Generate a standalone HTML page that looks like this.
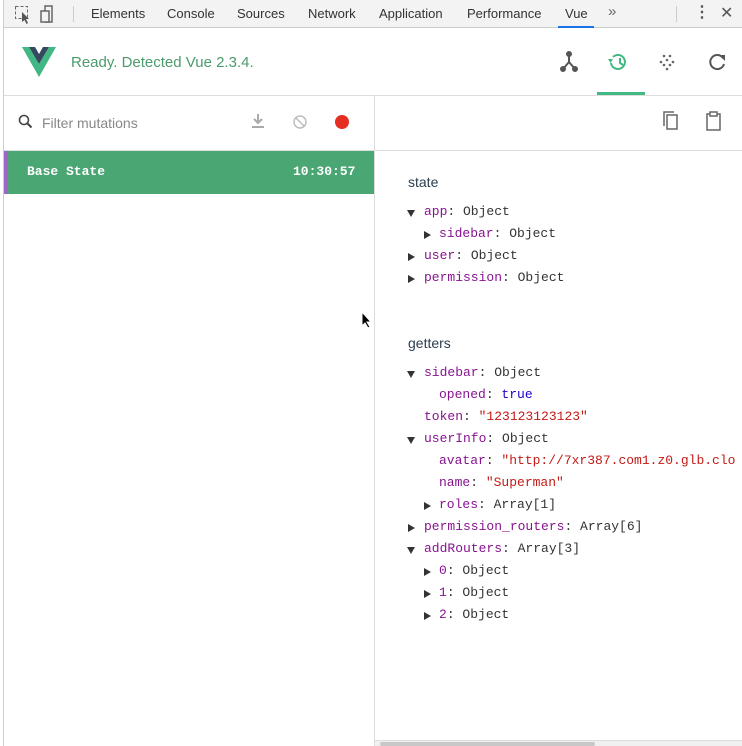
<!DOCTYPE html>
<html><head><meta charset="utf-8"><style>
*{margin:0;padding:0;box-sizing:border-box}
body{width:742px;height:746px;background:#fff;position:relative;overflow:hidden;font-family:"Liberation Sans",sans-serif}
.a{position:absolute}
.tab{position:absolute;top:6px;font-size:13px;color:#333}
.mono{font-family:"Liberation Mono",monospace;font-size:13px;color:#333;position:absolute;white-space:nowrap}
.k{color:#881391}.s{color:#c41a16}.b{color:#1c00cf}
.tri{position:absolute;width:0;height:0}
.dn{border-left:4px solid transparent;border-right:4px solid transparent;border-top:7px solid #333}
.rt{border-top:4px solid transparent;border-bottom:4px solid transparent;border-left:7px solid #333}
.h{position:absolute;font-size:14px;color:#2c3e50}
</style></head><body>
<div class="a" style="left:3px;top:0;width:1px;height:746px;background:#ccc"></div>
<div class="a" style="left:4px;top:0;width:738px;height:28px;background:#f3f3f3;border-bottom:1px solid #ccc"></div>
<svg class="a" style="left:14px;top:5px" width="50" height="20"><rect x="1.5" y="1.5" width="12" height="12" fill="none" stroke="#666" stroke-dasharray="3 2"/><path d="M8 7l7 7-3 0 2 4-1.5 1-2-4-2.5 2z" fill="#555"/><rect x="31" y="1" width="7" height="16" fill="none" stroke="#666" stroke-width="1.5"/><rect x="27" y="6" width="8" height="11" fill="#f3f3f3" stroke="#666" stroke-width="1.5"/></svg>
<div class="a" style="left:73px;top:6px;width:1px;height:16px;background:#ccc"></div>
<div class="tab" style="left:91px">Elements</div>
<div class="tab" style="left:167px">Console</div>
<div class="tab" style="left:237px">Sources</div>
<div class="tab" style="left:308px">Network</div>
<div class="tab" style="left:379px">Application</div>
<div class="tab" style="left:467px">Performance</div>
<div class="tab" style="left:565px">Vue</div>
<div class="a" style="left:558px;top:26px;width:36px;height:2px;background:#1a73e8"></div>
<div class="tab" style="left:608px;top:3px;font-size:15px;color:#666">»</div>
<div class="a" style="left:676px;top:6px;width:1px;height:16px;background:#ccc"></div>
<div class="tab" style="left:694px;top:2px;font-size:16px;color:#555;font-weight:bold">⋮</div>
<div class="tab" style="left:720px;top:3px;font-size:16px;color:#555">✕</div>
<svg class="a" style="left:22px;top:47px" width="34" height="30" viewBox="0 0 34 30"><path d="M0 0h7l10 17L27 0h7L17 30z" fill="#41b883"/><path d="M7 0h6l4 7 4-7h6L17 17z" fill="#35495e"/></svg>
<div class="a" style="left:71px;top:54px;font-size:15px;color:#4b9b6c">Ready. Detected Vue 2.3.4.</div>
<svg class="a" style="left:558px;top:51px" width="170" height="22"><g fill="#555" stroke="#555" stroke-width="2"><path d="M11 3v8M11 11l-6 7M11 11l6 7" fill="none"/><circle cx="11" cy="3" r="2"/><circle cx="5" cy="18" r="2"/><circle cx="17" cy="18" r="2"/></g>
<g stroke="#42b983" stroke-width="2" fill="none"><path d="M55 6a7 7 0 1 1-2 6"/><path d="M62 7v5l3 2"/></g><path d="M50 8l5 0-2.5 4z" fill="#42b983"/>
<g fill="#666"><circle cx="106" cy="5" r="1.3"/><circle cx="112" cy="5" r="1.3"/><circle cx="109" cy="9" r="1.3"/><circle cx="103" cy="11" r="1.3"/><circle cx="115" cy="11" r="1.3"/><circle cx="106" cy="14" r="1.3"/><circle cx="112" cy="14" r="1.3"/><circle cx="109" cy="18" r="1.3"/></g>
<path d="M165 7a7 7 0 1 0 1 6" stroke="#555" stroke-width="2" fill="none"/><path d="M161 4h6v6z" fill="#555"/></svg>
<div class="a" style="left:597px;top:92px;width:48px;height:3px;background:#42b983"></div>
<div class="a" style="left:4px;top:95px;width:738px;height:1px;background:#ddd"></div>
<div class="a" style="left:374px;top:96px;width:1px;height:650px;background:#ddd"></div>
<svg class="a" style="left:18px;top:114px" width="16" height="16"><circle cx="6" cy="6" r="4.5" stroke="#444" stroke-width="1.6" fill="none"/><path d="M9.5 9.5l4 4" stroke="#444" stroke-width="2"/></svg>
<div class="a" style="left:42px;top:115px;font-size:14px;color:#888">Filter mutations</div>
<svg class="a" style="left:250px;top:113px" width="110" height="20"><path d="M8 1v9M4 6l4 4 4-4" stroke="#aaa" stroke-width="2" fill="none"/><rect x="2" y="13" width="12" height="2" fill="#aaa"/><circle cx="50" cy="9" r="6" stroke="#bbb" stroke-width="1.4" fill="none"/><path d="M46 5l8 8" stroke="#bbb" stroke-width="1.4"/><circle cx="92" cy="9" r="7" fill="#e62d22"/></svg>
<div class="a" style="left:4px;top:150px;width:370px;height:1px;background:#ddd"></div>
<div class="a" style="left:4px;top:151px;width:370px;height:43px;background:#4aa673;border-left:4px solid #9c67c8"></div>
<div class="mono" style="left:27px;top:164px;color:#fff;font-weight:bold">Base State</div>
<div class="mono" style="left:293px;top:164px;color:#fff;font-weight:bold">10:30:57</div>
<svg class="a" style="left:660px;top:110px" width="66" height="24"><rect x="7" y="5" width="10" height="14" fill="none" stroke="#666" stroke-width="1.5"/><path d="M4 16V2h10" stroke="#666" stroke-width="1.5" fill="none"/><rect x="47" y="4" width="13" height="16" fill="none" stroke="#666" stroke-width="1.5"/><rect x="50" y="2" width="7" height="4" fill="#fff" stroke="#666" stroke-width="1.5"/></svg>
<div class="a" style="left:375px;top:150px;width:367px;height:1px;background:#ddd"></div>
<div class="a" style="left:375px;top:151px;width:367px;height:589px;overflow:hidden">
<div style="position:absolute;left:-375px;top:-151px;width:742px;height:746px">
<div class="h" style="left:408px;top:174px">state</div>
<div class="tri dn" style="left:407px;top:210px"></div><div class="mono" style="left:424px;top:204px"><span class="k">app</span>: Object</div>
<div class="tri rt" style="left:424px;top:231px"></div><div class="mono" style="left:439px;top:226px"><span class="k">sidebar</span>: Object</div>
<div class="tri rt" style="left:408px;top:253px"></div><div class="mono" style="left:424px;top:248px"><span class="k">user</span>: Object</div>
<div class="tri rt" style="left:408px;top:275px"></div><div class="mono" style="left:424px;top:270px"><span class="k">permission</span>: Object</div>
<div class="h" style="left:408px;top:335px">getters</div>
<div class="tri dn" style="left:407px;top:371px"></div><div class="mono" style="left:424px;top:365px"><span class="k">sidebar</span>: Object</div>
<div class="mono" style="left:439px;top:387px"><span class="k">opened</span>: <span class="b">true</span></div>
<div class="mono" style="left:424px;top:409px"><span class="k">token</span>: <span class="s">"123123123123"</span></div>
<div class="tri dn" style="left:407px;top:437px"></div><div class="mono" style="left:424px;top:431px"><span class="k">userInfo</span>: Object</div>
<div class="mono" style="left:439px;top:453px"><span class="k">avatar</span>: <span class="s">"http://7xr387.com1.z0.glb.clo</span></div>
<div class="mono" style="left:439px;top:475px"><span class="k">name</span>: <span class="s">"Superman"</span></div>
<div class="tri rt" style="left:424px;top:502px"></div><div class="mono" style="left:439px;top:497px"><span class="k">roles</span>: Array[1]</div>
<div class="tri rt" style="left:408px;top:524px"></div><div class="mono" style="left:424px;top:519px"><span class="k">permission_routers</span>: Array[6]</div>
<div class="tri dn" style="left:407px;top:547px"></div><div class="mono" style="left:424px;top:541px"><span class="k">addRouters</span>: Array[3]</div>
<div class="tri rt" style="left:424px;top:568px"></div><div class="mono" style="left:439px;top:563px"><span class="k">0</span>: Object</div>
<div class="tri rt" style="left:424px;top:590px"></div><div class="mono" style="left:439px;top:585px"><span class="k">1</span>: Object</div>
<div class="tri rt" style="left:424px;top:612px"></div><div class="mono" style="left:439px;top:607px"><span class="k">2</span>: Object</div>
</div></div>
<div class="a" style="left:375px;top:740px;width:367px;height:6px;background:#f0f0f0;border-top:1px solid #ddd"></div>
<div class="a" style="left:380px;top:742px;width:215px;height:4px;background:#c8c8c8;border-radius:2px"></div>
<svg class="a" style="left:361px;top:311px" width="12" height="18"><path d="M1 1v14l3-3 3 5 2-1-3-5h4z" fill="#000" stroke="#fff" stroke-width="1"/></svg>
</body></html>
